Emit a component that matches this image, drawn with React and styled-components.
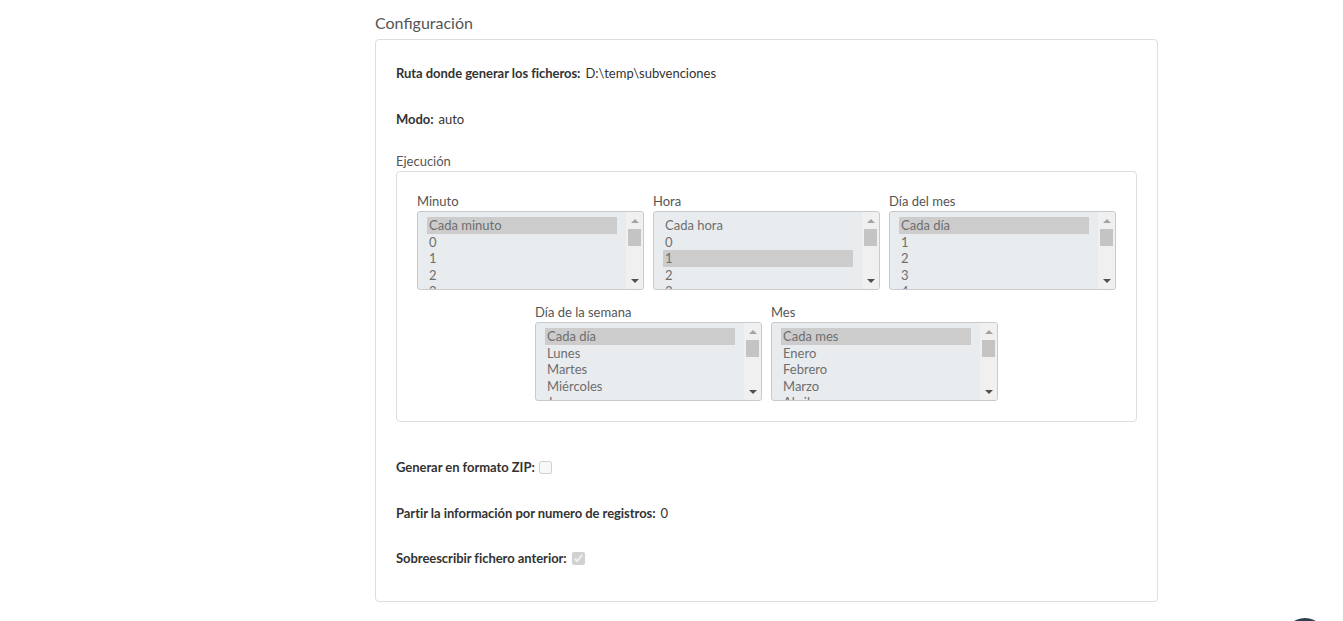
import React from "react";
import styled, { createGlobalStyle } from "styled-components";

const GlobalStyle = createGlobalStyle`
  html, body {
    margin: 0;
    padding: 0;
    background: #ffffff;
    font-family: Lato, "Open Sans", "Liberation Sans", sans-serif;
  }
  * { box-sizing: border-box; }
`;

const Page = styled.div`
  width: 1343px;
  min-height: 621px;
  padding-left: 375px;
`;

const Main = styled.main`
  width: 783px;
`;

const Title = styled.h2`
  margin: 13px 0 6px;
  font-size: 16px;
  line-height: 20px;
  font-weight: 400;
  color: #555555;
`;

const Panel = styled.section`
  border: 1px solid #dddddd;
  border-radius: 4px;
  padding: 23px 20px 33px;
  display: flex;
  flex-direction: column;
`;

const Field = styled.div`
  display: flex;
  align-items: center;
  gap: ${(p) => p.$gap || 5}px;
  height: 20px;
  line-height: 20px;
  font-size: 13px;
  color: #333333;
  margin-top: ${(p) => p.$mt || 0}px;
`;

const FieldLabel = styled.span`
  font-weight: 700;
  color: #333333;
  letter-spacing: -0.05px;
`;

const FieldValue = styled.span`
  color: #333333;
`;

const SectionLabel = styled.div`
  margin-top: 22px;
  margin-bottom: 0;
  font-size: 13px;
  line-height: 20px;
  color: #555555;
`;

const InnerPanel = styled.div`
  border: 1px solid #dddddd;
  border-radius: 4px;
  padding: 19px 20px 20px;
  display: flex;
  flex-direction: column;
  gap: 12px;
`;

const SelectRow = styled.div`
  display: grid;
  grid-template-columns: repeat(${(p) => p.$cols}, 227px);
  column-gap: 9px;
  justify-content: center;
`;

const SelectGroup = styled.div`
  display: flex;
  flex-direction: column;
`;

const SelectLabel = styled.label`
  font-size: 13px;
  line-height: 20px;
  color: #555555;
`;

const ListBox = styled.div`
  display: flex;
  height: 79px;
  border: 1px solid #c8cacc;
  border-radius: 3px;
  background: #e9ecef;
  overflow: hidden;
`;

const OptionList = styled.ul`
  flex: 1;
  margin: 0;
  list-style: none;
  padding: 5px 9px 0 9px;
  overflow: hidden;
`;

const Option = styled.li`
  height: 16.5px;
  line-height: 16.5px;
  padding-left: 2px;
  font-size: 13px;
  color: #6e6e6e;
  white-space: nowrap;
  background: ${(p) => (p.$selected ? "#cccccc" : "transparent")};
`;

const ScrollTrack = styled.div`
  width: 17px;
  background: #f0f0f0;
  display: flex;
  flex-direction: column;
`;

const ScrollButton = styled.div`
  height: 17px;
  display: flex;
  align-items: center;
  justify-content: center;
`;

const Arrow = styled.span`
  width: 0;
  height: 0;
  border-left: 4px solid transparent;
  border-right: 4px solid transparent;
  ${(p) =>
    p.$dir === "up"
      ? "border-bottom: 4px solid #a3a3a3;"
      : "border-top: 4px solid #505050;"}
`;

const Thumb = styled.div`
  height: 17px;
  margin: 0 2px;
  background: #c4c4c4;
`;

const TrackSpace = styled.div`
  flex: 1;
`;

const Check = styled.input`
  width: 13px;
  height: 13px;
  margin: 0;
`;

const FloatButton = styled.div`
  position: fixed;
  left: 1283px;
  top: 618px;
  width: 44px;
  height: 44px;
  border-radius: 50%;
  background: #2c3e50;
`;

const Select = ({ label, options, selected }) => (
  <SelectGroup>
    <SelectLabel>{label}</SelectLabel>
    <ListBox>
      <OptionList>
        {options.map((o, i) => (
          <Option key={o} $selected={i === selected}>
            {o}
          </Option>
        ))}
      </OptionList>
      <ScrollTrack>
        <ScrollButton>
          <Arrow $dir="up" />
        </ScrollButton>
        <Thumb />
        <TrackSpace />
        <ScrollButton>
          <Arrow $dir="down" />
        </ScrollButton>
      </ScrollTrack>
    </ListBox>
  </SelectGroup>
);

export default function App() {
  return (
    <Page>
      <GlobalStyle />
      <Main>
        <Title>Configuración</Title>
        <Panel>
          <Field>
            <FieldLabel>Ruta donde generar los ficheros:</FieldLabel>
            <FieldValue>D:\temp\subvenciones</FieldValue>
          </Field>
          <Field $mt={26}>
            <FieldLabel>Modo:</FieldLabel>
            <FieldValue>auto</FieldValue>
          </Field>
          <SectionLabel>Ejecución</SectionLabel>
          <InnerPanel>
            <SelectRow $cols={3}>
              <Select
                label="Minuto"
                options={["Cada minuto", "0", "1", "2", "3"]}
                selected={0}
              />
              <Select
                label="Hora"
                options={["Cada hora", "0", "1", "2", "3"]}
                selected={2}
              />
              <Select
                label="Día del mes"
                options={["Cada día", "1", "2", "3", "4"]}
                selected={0}
              />
            </SelectRow>
            <SelectRow $cols={2}>
              <Select
                label="Día de la semana"
                options={["Cada día", "Lunes", "Martes", "Miércoles", "Jueves"]}
                selected={0}
              />
              <Select
                label="Mes"
                options={["Cada mes", "Enero", "Febrero", "Marzo", "Abril"]}
                selected={0}
              />
            </SelectRow>
          </InnerPanel>
          <Field $mt={35} $gap={4}>
            <FieldLabel>Generar en formato ZIP:</FieldLabel>
            <Check type="checkbox" disabled />
          </Field>
          <Field $mt={26}>
            <FieldLabel>Partir la información por numero de registros:</FieldLabel>
            <FieldValue>0</FieldValue>
          </Field>
          <Field $mt={25} $gap={5}>
            <FieldLabel>Sobreescribir fichero anterior:</FieldLabel>
            <Check type="checkbox" disabled defaultChecked />
          </Field>
        </Panel>
      </Main>
      <FloatButton />
    </Page>
  );
}
